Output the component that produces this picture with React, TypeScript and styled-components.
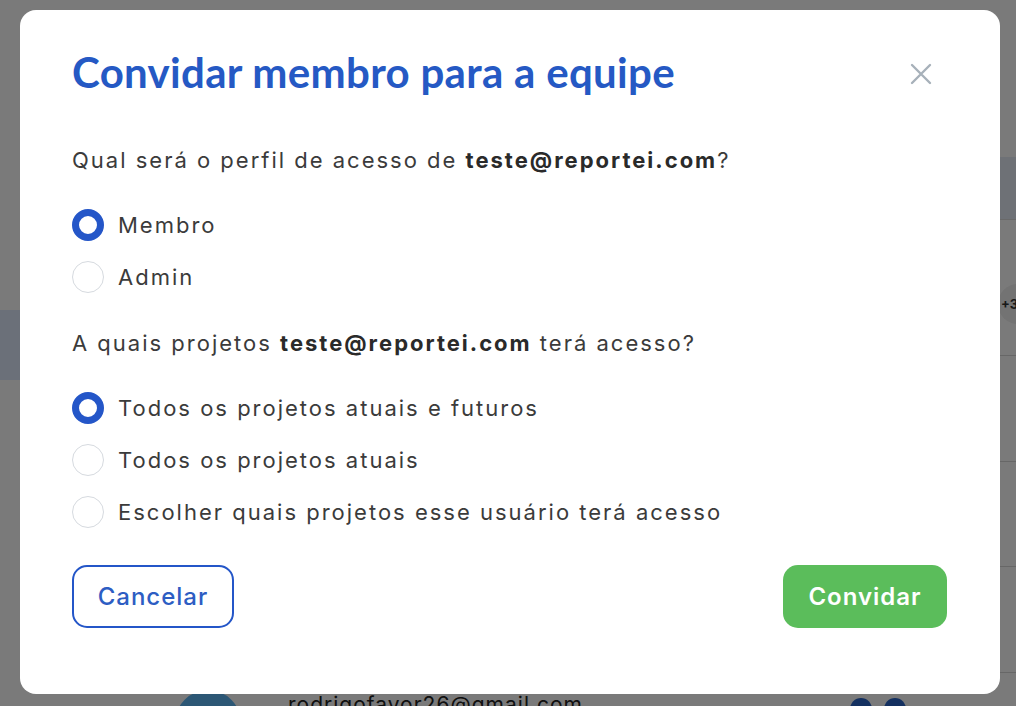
import React from "react";
import styled, { createGlobalStyle } from "styled-components";

const Global = createGlobalStyle`
  html, body { margin: 0; padding: 0; }
  body { font-family: Inter, "Noto Sans", sans-serif; background: #fff; }
  * { box-sizing: border-box; }
`;

const Screen = styled.div`
  position: relative;
  width: 100vw;
  height: 100vh;
  overflow: hidden;
`;

const Page = styled.div`
  display: flex;
  height: 100%;
  background: #fff;
`;

const Sidebar = styled.aside`
  width: 150px;
  padding-top: 310px;
  flex-shrink: 0;
`;

const NavItem = styled.div`
  height: 70px;
  background: #e0eafc;
`;

const Main = styled.main`
  flex: 1;
  padding-top: 157px;
  display: flex;
  flex-direction: column;
  overflow: hidden;
`;

const TableHead = styled.div`
  height: 63px;
  flex-shrink: 0;
  background: #e6ecf7;
  border-bottom: 1px solid #dcdcdc;
`;

const Row = styled.div<{ $h: number }>`
  height: ${(p) => p.$h}px;
  border-bottom: 1px solid #d8d8d8;
  display: flex;
  align-items: flex-start;
  padding-left: 25px;
  flex-shrink: 0;
`;

const RowEnd = styled.div`
  margin-left: auto;
  padding-top: 64px;
  margin-right: -22px;
`;

const MoreBadge = styled.div`
  width: 40px;
  height: 40px;
  border-radius: 50%;
  background: #f0f0f0;
  font: 700 13px Inter, sans-serif;
  color: #333;
  display: flex;
  align-items: center;
  padding-left: 3px;
`;

const Avatar = styled.div`
  width: 66px;
  height: 66px;
  border-radius: 50%;
  background: #5cb6f5;
  margin-top: 17px;
  flex-shrink: 0;
`;

const Email = styled.div`
  margin-left: 47px;
  margin-top: 19px;
  font: 400 21px Inter, sans-serif;
  letter-spacing: 1px;
  color: #222;
`;

const Dots = styled.div`
  margin-left: auto;
  margin-right: 110px;
  margin-top: 25px;
  display: flex;
  gap: 12px;
`;

const Dot = styled.div`
  width: 22px;
  height: 22px;
  border-radius: 50%;
  background: #2a64c8;
`;

const Overlay = styled.div`
  position: fixed;
  inset: 0;
  background: rgba(0, 0, 0, 0.52);
  display: flex;
  align-items: flex-start;
  padding: 10px 16px 12px 20px;
`;

const Modal = styled.div`
  width: 980px;
  height: 684px;
  background: #fff;
  border-radius: 16px;
  padding: 30px 53px 0 52px;
  display: flex;
  flex-direction: column;
`;

const Header = styled.div`
  display: flex;
  align-items: center;
  justify-content: space-between;
  height: 64px;
`;

const Title = styled.h2`
  margin: 0;
  font-family: Lato, "Open Sans", sans-serif;
  font-weight: 700;
  font-size: 42px;
  letter-spacing: 0.3px;
  color: #2559c4;
`;

const CloseButton = styled.button`
  border: 0;
  background: none;
  padding: 0;
  width: 22px;
  height: 22px;
  margin-right: 15px;
  margin-top: 4px;
  cursor: pointer;
  display: flex;
`;

const Question = styled.p<{ $mt: number }>`
  margin: ${(p) => p.$mt}px 0 0;
  font-size: 22px;
  letter-spacing: 2px;
  line-height: 32px;
  color: #3b3b3b;
  b { font-weight: 700; color: #2a2a2a; }
`;

const Options = styled.div`
  margin-top: 23px;
  display: flex;
  flex-direction: column;
`;

const Option = styled.label`
  display: flex;
  align-items: center;
  height: 52px;
  gap: 14px;
  font-size: 22px;
  letter-spacing: 2px;
  color: #3b3b3b;
  cursor: pointer;
`;

const Radio = styled.span<{ $on?: boolean }>`
  width: 32px;
  height: 32px;
  border-radius: 50%;
  flex-shrink: 0;
  border: ${(p) => (p.$on ? "7px solid #2456c8" : "1.5px solid #d6dadf")};
  background: #fff;
`;

const Footer = styled.div`
  margin-top: 27px;
  display: flex;
  justify-content: space-between;
`;

const Button = styled.button<{ $primary?: boolean }>`
  height: 63px;
  width: ${(p) => (p.$primary ? 164 : 162)}px;
  border-radius: 15px;
  font-family: Inter, sans-serif;
  font-size: 24px;
  letter-spacing: 1px;
  font-weight: ${(p) => (p.$primary ? 600 : 500)};
  cursor: pointer;
  border: ${(p) => (p.$primary ? "none" : "2.5px solid #2456c8")};
  background: ${(p) => (p.$primary ? "#5bbd5b" : "#fff")};
  color: ${(p) => (p.$primary ? "#fff" : "#2d5dc3")};
`;

const email = "teste@reportei.com";

export default function App() {
  return (
    <Screen>
      <Global />
      <Page>
        <Sidebar>
          <NavItem />
        </Sidebar>
        <Main>
          <TableHead />
          <Row $h={136}>
            <RowEnd>
              <MoreBadge>+3</MoreBadge>
            </RowEnd>
          </Row>
          <Row $h={106} />
          <Row $h={105} />
          <Row $h={106} />
          <Row $h={106}>
            <Avatar />
            <Email>rodrigofavor26@gmail.com</Email>
            <Dots>
              <Dot />
              <Dot />
            </Dots>
          </Row>
        </Main>
      </Page>
      <Overlay>
        <Modal role="dialog">
          <Header>
            <Title>Convidar membro para a equipe</Title>
            <CloseButton aria-label="Fechar">
              <svg width="22" height="22" viewBox="0 0 22 22">
                <path d="M2 2 L20 20 M20 2 L2 20" stroke="#a7b1ba" strokeWidth="2.4" strokeLinecap="round" />
              </svg>
            </CloseButton>
          </Header>
          <Question $mt={40}>
            Qual será o perfil de acesso de <b>{email}</b>?
          </Question>
          <Options>
            <Option>
              <Radio $on />
              Membro
            </Option>
            <Option>
              <Radio />
              Admin
            </Option>
          </Options>
          <Question $mt={24}>
            A quais projetos <b>{email}</b> terá acesso?
          </Question>
          <Options>
            <Option>
              <Radio $on />
              Todos os projetos atuais e futuros
            </Option>
            <Option>
              <Radio />
              Todos os projetos atuais
            </Option>
            <Option>
              <Radio />
              Escolher quais projetos esse usuário terá acesso
            </Option>
          </Options>
          <Footer>
            <Button>Cancelar</Button>
            <Button $primary>Convidar</Button>
          </Footer>
        </Modal>
      </Overlay>
    </Screen>
  );
}
